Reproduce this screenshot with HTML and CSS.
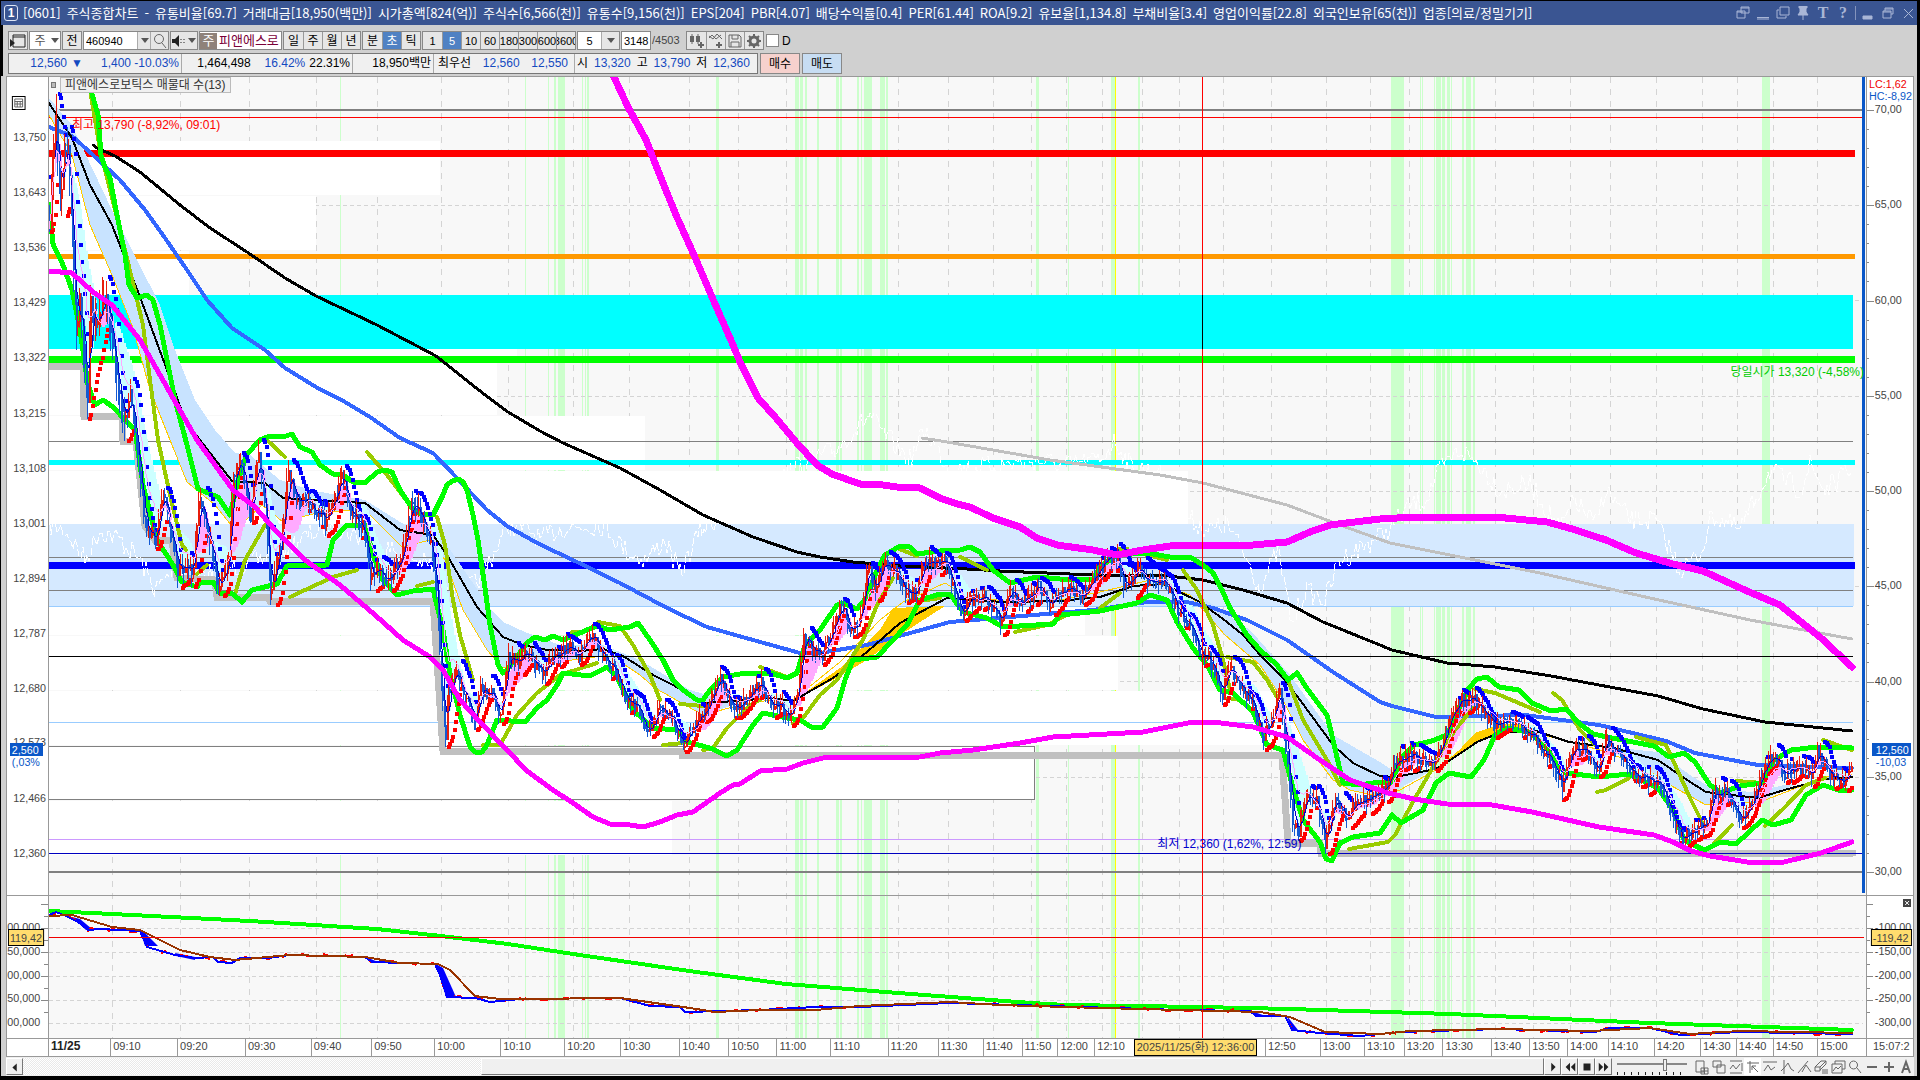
FILE: index.html
```html
<!DOCTYPE html>
<html lang="ko">
<head>
<meta charset="utf-8">
<title>[0601] 주식종합차트</title>
<link rel="stylesheet" href="styles.css">
</head>
<body>
<div class="window">
  <header class="title">
    <span class="title-num">1</span>
    <h1 class="title-text"><span>[0601]</span><span>주식종합차트</span><span>-</span><span>유통비율[69.7]</span><span>거래대금[18,950(백만)]</span><span>시가총액[824(억)]</span><span>주식수[6,566(천)]</span><span>유통수[9,156(천)]</span><span>EPS[204]</span><span>PBR[4.07]</span><span>배당수익률[0.4]</span><span>PER[61.44]</span><span>ROA[9.2]</span><span>유보율[1,134.8]</span><span>부채비율[3.4]</span><span>영업이익률[22.8]</span><span>외국인보유[65(천)]</span><span>업종[의료/정밀기기]</span></h1>
    <div class="title-btns">
      <button aria-label="분리"><svg viewBox="0 0 14 14"><path d="M5 1h8v6H5zM1 5h8v7H1z"/><path d="M5 2h8M1 6h6"/></svg></button>
      <button aria-label="접기"><svg viewBox="0 0 14 14"><path d="M1 11.500h12M1 13h12"/></svg></button>
      <button aria-label="복사"><svg viewBox="0 0 14 14"><path d="M4 1h9v8H4zM1 4v8h9v-2M1 4h2"/></svg></button>
      <button aria-label="고정"><svg viewBox="0 0 14 14"><path class="fill" d="M3 0h8v2h-1v4l2 3H2l2-3V2H3z"/><path d="M7 8v6"/></svg></button>
      <button class="glyph" aria-label="글자">T</button>
      <button class="glyph" aria-label="도움말">?</button>
      <i class="title-sep"></i>
      <button aria-label="최소화"><svg viewBox="0 0 14 14"><path class="fill" d="M2 10h9v3H2z"/></svg></button>
      <button aria-label="복원"><svg viewBox="0 0 14 14"><path d="M4 5V2h8v6h-2M2 5h8v7H2zM4 3h8M2 6h8"/></svg></button>
      <button aria-label="닫기"><svg viewBox="0 0 14 14"><path d="M3 3l9 9M12 3l-9 9"/></svg></button>
    </div>
  </header>

  <div class="tools">
    <div class="row">
      <button class="btn w20" aria-label="패널"><svg viewBox="0 0 16 16" class="ic"><path d="M3 2h12v12H3zM3 4h12"/><path class="fill" d="M0 6l5 4-5 4z"/></svg></button>
      <button class="btn w32 split dim"><span>주</span><i class="arr"></i></button>
      <button class="btn w20">전</button>
      <div class="field"><input class="code" aria-label="종목코드" value="460940"><button class="drop" aria-label="목록"><i class="arr"></i></button><button class="drop wide" aria-label="검색"><svg viewBox="0 0 16 16" class="ic soft"><circle cx="7" cy="6" r="4.500"/><path d="M10 10l4 5"/></svg></button></div>
      <button class="btn w28 split" aria-label="소리"><svg viewBox="0 0 16 16" class="ic"><path class="fill" d="M1 6h3l4-4v12l-4-4H1z"/><path d="M10 6v1M10 9v1M13 6v1M13 9v1"/></svg><i class="arr"></i></button>
      <div class="stock"><b>주</b><span>피앤에스로</span></div>
      <div class="group"><button>일</button><button>주</button><button>월</button><button>년</button></div>
      <div class="group"><button>분</button><button class="on">초</button><button>틱</button></div>
      <div class="group num"><button>1</button><button class="on">5</button><button>10</button><button>60</button><button>180</button><button>300</button><button>600</button><button>3600</button></div>
      <div class="field"><input class="cnt" aria-label="주기" value="5"><button class="drop wide" aria-label="주기 목록"><i class="arr"></i></button></div>
      <div class="field"><input class="bars" aria-label="봉 개수" value="3148"></div>
      <span class="total">/4503</span>
      <div class="group">
        <button aria-label="봉 추가"><svg viewBox="0 0 16 16" class="ic soft"><path class="fill" d="M1 3h4v6H1zM7 3h4v6H7z"/><path d="M3 1v10M9 1v10"/><path d="M12 9v6M9 12h6" stroke-width="2"/></svg></button>
        <button aria-label="지표 추가"><svg viewBox="0 0 16 16" class="ic soft"><path d="M1 5l3-3 4 4 5-4M1 3l4 3 4-5 5 5"/><path d="M11 9v6M8 12h6" stroke-width="2"/></svg></button>
        <button aria-label="저장"><svg viewBox="0 0 16 16" class="ic soft"><path d="M2 2h10l2 2v10H2zM5 2v4h6V2M4 14V9h8v5"/></svg></button>
        <button aria-label="설정"><svg viewBox="0 0 16 16" class="ic soft"><circle cx="8" cy="8" r="4" stroke-width="3"/><path d="M8 1v2M8 13v2M1 8h2M13 8h2M3 3l2 2M11 11l2 2M13 3l-2 2M5 11l-2 2" stroke-width="2"/></svg></button>
      </div>
      <label class="chk"><input type="checkbox">D</label>
    </div>
    <div class="row">
      <div class="quote">
        <span class="q q1 blue"><em class="e58">12,560</em><em class="e14">▼</em><em class="e48">1,400</em><em class="e48">-10.03%</em></span>
        <span class="q q2"><em class="e72">1,464,498</em><em class="e57 blue">16.42%</em><em>22.31%</em></span>
        <span class="q q3"><em>18,950백만</em></span>
        <span class="q q4"><em>최우선</em><em class="blue">12,560</em><em class="blue">12,550</em></span>
        <span class="q q5"><em>시</em><em class="blue">13,320</em><em>고</em><em class="blue">13,790</em><em>저</em><em class="blue">12,360</em></span>
      </div>
      <button class="trade buy">매수</button>
      <button class="trade sell">매도</button>
    </div>
  </div>

  <main class="chart">
    <div class="axis main-left"><svg id="axl" viewBox="7 77 42 818" preserveAspectRatio="none"></svg></div>
    <div class="plot"><svg id="main" viewBox="49 77 1817 818" preserveAspectRatio="none"></svg>
      <span class="legend"><i></i><b>피앤에스로보틱스 매물대 수(13)</b></span>
      <span class="note hi">최고 13,790 (-8,92%, 09:01)</span>
      <span class="note open">당일시가 13,320 (-4,58%)</span>
      <span class="note lo">최저 12,360 (1,62%, 12:59)</span>
    </div>
    <div class="axis right"><svg id="axr" viewBox="1866 77 47 818" preserveAspectRatio="none"></svg></div>
    <div class="axis"><svg id="axl2" viewBox="7 896 42 142" preserveAspectRatio="none"></svg></div>
    <div class="plot"><svg id="sub" viewBox="49 896 1817 142" preserveAspectRatio="none"></svg></div>
    <div class="axis right"><svg id="axr2" viewBox="1866 896 47 142" preserveAspectRatio="none"></svg></div>
    <div class="axis"></div>
    <div class="plot times" id="times"></div>
    <div class="axis right last">15:07:2</div>
  </main>

  <footer class="foot">
    <button class="sb" aria-label="왼쪽"><svg viewBox="0 0 16 16" class="ic"><path class="fill" d="M10 4v9L5 8.500z"/></svg></button>
    <div class="track"><div class="thumb"></div></div>
    <div class="play">
      <button class="sb" aria-label="재생"><svg viewBox="0 0 16 16" class="ic"><path class="fill" d="M6 3v10l5-5z"/></svg></button>
      <button class="sb" aria-label="뒤로"><svg viewBox="0 0 16 16" class="ic"><path class="fill" d="M8 3v10L3 8zM14 3v10L9 8z"/></svg></button>
      <button class="sb" aria-label="정지"><svg viewBox="0 0 16 16" class="ic"><path class="fill" d="M4 4h8v8H4z"/></svg></button>
      <button class="sb" aria-label="앞으로"><svg viewBox="0 0 16 16" class="ic"><path class="fill" d="M2 3v10l5-5zM8 3v10l5-5z"/></svg></button>
    </div>
    <input class="speed" type="range" aria-label="속도" value="70">
    <div class="fticons" id="ft"></div>
  </footer>
</div>
<script src="chart.js"></script>
</body>
</html>
```
FILE: styles.css
```css
* { box-sizing: border-box; }
body {
  margin: 0;
  background: #000;
  color: #000;
  font: 12px/16px "Liberation Sans", "Noto Sans CJK KR", sans-serif;
}
button, input, select { font: inherit; color: inherit; margin: 0; padding: 0; border: 0; background: none; }
em { font-style: normal; }
.window { min-height: 100vh; display: flex; flex-direction: column; border: solid #000; border-width: 1px 3px 4px 1px; background: #d0d0d0; }

.title { display: flex; align-items: center; height: 24px; background: #3a5592; color: #fff; padding: 0 1px 0 3px; flex: none; }
.title-num { width: 14px; height: 16px; border: 1px solid #dfe6f5; border-radius: 3px; text-align: center; line-height: 14px; font-weight: bold; }
.title-text { margin: 0 0 0 5px; font: 13px/16px "Noto Sans CJK KR", sans-serif; flex: 1; display: flex; gap: 6px; white-space: nowrap; }
.title-btns { display: flex; align-items: center; gap: 4px; color: #a9b6d6; }
.title-btns button { width: 16px; height: 18px; display: grid; place-items: center; }
.title-btns svg { width: 14px; height: 14px; fill: none; stroke: currentColor; }
.title-btns .fill { fill: currentColor; }
.title-btns .glyph { font: bold 16px/18px "Liberation Serif", serif; }
.title-sep { width: 1px; height: 14px; background: #8494bd; }

.tools { padding: 6px 0 2px 5px; display: flex; flex-direction: column; gap: 3px; border-left: 2px solid #000; background: #d0d0d0; flex: none; }
.row { display: flex; gap: 2px; align-items: stretch; }
.row:first-child { height: 19px; gap: 1px; }
.row:last-child { height: 21px; }
.btn, .group, .field, .stock { border: 1px solid #888; background: #e6e6e6; display: flex; align-items: center; justify-content: center; }
.w20 { width: 20px; }
.w28 { width: 28px; }
.w32 { width: 32px; background: #fff; }
.dim { color: #555; }
.split { justify-content: space-between; }
.split > span { flex: 1; }
.arr { border: 4px solid transparent; border-top: 5px solid #555; border-bottom: 0; margin: 0 3px; }
.split .arr { margin: 0 1px; }
.ic { width: 16px; height: 16px; fill: none; stroke: #222; }
.ic .fill { fill: #222; stroke: none; }
.soft { stroke: #666; }
.soft .fill { fill: #666; }
.field input { background: #fff; height: 17px; padding-left: 2px; outline: 0; font-size: 11px; }
.code { width: 53px; }
.field .cnt { width: 23px; padding: 0; text-align: center; }
.bars { width: 28px; }
.drop { width: 13px; height: 17px; border-left: 1px solid #aaa; display: grid; place-items: center; }
.drop.wide { width: 18px; }
.stock { width: 83px; background: #fff; justify-content: flex-start; overflow: hidden; color: #7a0038; white-space: nowrap; gap: 2px; font-size: 13px; }
.stock b { font-weight: normal; background: #8f827a; color: #fff; width: 17px; text-align: center; }
.group button { width: 19px; height: 17px; border-left: 1px solid #999; overflow: hidden; display: flex; justify-content: center; align-items: center; }
.group button:first-child { border: 0; }
.group .on { background: #4f81c3; color: #fff; }
.num { font-size: 11px; }
.total { color: #444; width: 33px; line-height: 19px; font-size: 11px; }
.chk { display: flex; gap: 3px; align-items: center; padding-left: 1px; }
.chk input { appearance: none; width: 13px; height: 13px; border: 1px solid #888; background: #fff; }

.quote { display: flex; border: 1px solid #777; background: #f0f0f0; width: 750px; line-height: 19px; }
.q { display: flex; border-right: 1px solid #aaa; justify-content: flex-end; padding-right: 2px; gap: 5px; white-space: nowrap; }
.q em { text-align: right; }
.q:last-child { border: 0; }
.blue { color: #1349c0; }
.q1 { width: 173px; gap: 0; }
.q2 { width: 171px; gap: 4px; }
.q3 { width: 81px; }
.q4 { width: 141px; padding: 0 6px 0 4px; justify-content: space-between; }
.q5 { flex: 1; padding: 0 7px 0 2px; justify-content: space-between; }
.e58 { width: 58px; } .e14 { width: 16px; } .e48 { width: 48px; } .e72 { width: 72px; } .e57 { width: 53px; }
.trade { width: 40px; border: 1px solid #888; }
.buy { background: #f6d1cd; }
.sell { background: #c7ddf3; }

.chart { flex: 1; display: grid; grid-template-columns: 42px 1fr 47px; grid-template-rows: 819fr 143fr 18px; border: 1px solid #999; border-bottom: 0; margin: 0 3px 0 5px; min-height: 400px; }
.chart > div { position: relative; border-bottom: 1px solid #999; background: #fff; min-width: 0; min-height: 0; overflow: hidden; }
.chart > .plot { background: #f8f8f8; }
.chart > .axis { border-right: 1px solid #999; }
.chart > .right { border-right: 0; border-left: 1px solid #999; }
.chart svg { position: absolute; width: 100%; height: 100%; font-size: 11px; }
.legend { position: absolute; left: 2px; top: 0; display: flex; align-items: center; gap: 4px; }
.legend i { width: 5px; height: 6px; background: #bbb; border: 1px solid #777; }
.legend b { font-weight: normal; background: #f0f0f0; border: 1px solid #bbb; padding: 0 4px; color: #333; line-height: 14px; }
.note { position: absolute; white-space: nowrap; }
.hi { left: 23px; top: 40px; color: #f00; }
.open { right: 2px; top: 287px; color: #0c0; }
.lo { left: 61%; top: 92.800%; color: #00c; }
.chart > .times { display: flex; background: #fff; color: #444; font-size: 11px; }
.times span { border-left: 1px solid #999; padding-left: 2px; min-width: 0; white-space: nowrap; line-height: 15px; }
.times span:first-child { border: 0; font-weight: bold; color: #222; font-size: 12px; }
.times .tag { position: absolute; left: 59.700%; top: 0; background: #ffdc6e; border: 1px solid #000; line-height: 15px; padding: 0 2px; }
.last { line-height: 15px; padding-left: 6px; color: #444; font-size: 11px; }

.foot { display: flex; height: 19px; margin: 0 3px 0 5px; background: #f0f0f0; flex: none; align-items: center; }
.sb { width: 17px; height: 17px; border: 1px solid #fff; border-right-color: #777; border-bottom-color: #777; background: #f0f0f0; display: grid; place-items: center; }
.sb .ic { width: 14px; height: 14px; }
.track { flex: 1; height: 17px; padding-left: 24%; background: repeating-conic-gradient(#fff 0 25%, #e9e9e9 0 50%) 0 0 / 2px 2px; }
.thumb { height: 17px; background: #f0f0f0; border: 1px solid #fff; border-right-color: #777; border-bottom-color: #777; }
.play { display: flex; }
.speed { appearance: none; width: 70px; height: 17px; margin: 0 6px 0 5px; background: linear-gradient(#888, #888) 0 5px / 100% 2px no-repeat, repeating-linear-gradient(90deg, #222 0 1px, transparent 1px 7px) 0 14px / 100% 3px no-repeat; }
.speed::-webkit-slider-thumb { appearance: none; width: 4px; height: 12px; margin-top: -3px; background: #f0f0f0; border: 1px solid #777; }
.fticons { display: flex; }
.fticons button { width: 17px; height: 17px; display: grid; place-items: center; }
.fticons .on { background: #fff; }
.fticons svg { width: 16px; height: 16px; fill: none; stroke: #666; }
```
FILE: chart.js
```js
const NS = 'http://www.w3.org/2000/svg';
const $ = id => document.getElementById(id);
function add(svg, tag, attrs, text) {
  const e = document.createElementNS(NS, tag);
  for (const k in attrs) e.setAttribute(k, attrs[k]);
  if (text) e.textContent = text;
  svg.appendChild(e);
  return e;
}
const pts = s => s.trim().split(/\s+/).map(p => p.split(',').map(Number));
let seed = 7;
const rnd = () => (seed = (seed * 16807) % 2147483647) / 2147483647;

const main = $('main'), sub = $('sub');
const line = (svg, s, color, w, extra) => add(svg, 'polyline', Object.assign({ points: s.trim(), fill: 'none', stroke: color, 'stroke-width': w, 'stroke-linejoin': 'round', 'stroke-linecap': 'round', 'shape-rendering': 'crispEdges' }, extra));
const rect = (svg, x, y, w, h, fill, extra) => add(svg, 'rect', Object.assign({ x, y, width: w, height: h, fill, 'shape-rendering': 'crispEdges' }, extra));
const dash = (svg, x1, y1, x2, y2, d) => add(svg, 'path', { d: `M${x1} ${y1}L${x2} ${y2}`, stroke: '#d4d4d4', 'stroke-dasharray': d, 'shape-rendering': 'crispEdges' });

/* grid and signal stripes */
const ticks = [112.5,180.5,249.5,316.5,377.5,441.5,508.5,573.5,629.5,689.5,738.5,786.5,840.5,898.5,948.5,993.5,1031.5,1066.5,1102.5,1142.5,1179.5,1223.5,1271.5,1326.5,1370.5,1409.5,1447.5,1495.5,1533.5,1570.5,1610.5,1656.5,1702.5,1737.5,1773.5,1817.5];
const stripes = [[340,1],[525,1],[548,1],[554,2],[558,7],[582,1],[585,1],[587,2],[716,3],[795,4],[800,3],[805,2],[817,2],[836,3],[840,2],[857,2],[861,1],[864,8],[880,5],[886,2],[1036,3],[1068,1],[1111,4],[1138,2],[1391,13],[1420,1],[1422,1],[1434,1],[1436,5],[1442,3],[1447,3],[1451,1],[1462,2],[1466,5],[1473,2],[1762,8]];
[main, sub].forEach(s => {
  ticks.forEach(x => dash(s, x, 77, x, 1038, '6 6'));
  stripes.forEach(([x, w]) => rect(s, x, 77, w, 961, '#ccffcc'));
  rect(s, 1115, 77, 1, 961, '#ffff00');
});
[205.5,300.5,396.5,491.5,586.5,681.5,777.5].forEach(y => dash(main, 49, y, 1863, y, '4 3'));
[928.5,952.5,976.5,1000.5,1023.5].forEach(y => dash(sub, 49, y, 1863, y, '4 3'));

/* volume profile */
[[141,440],[196,316],[251,189],[306,517],[361,497],[416,645],[471,1188],[526,1300],[581,1085],[636,1118],[691,1317],[746,1034],[801,672]].forEach(([y, x]) => rect(main, 49, y, x - 49, 54, '#fff'));
rect(main, 49, 295, 1804, 54, '#00ffff');
rect(main, 49, 524, 1805, 82, '#d5e9ff');

/* horizontal levels */
const h = (y, c, w, x2) => rect(main, 49, y, (x2 || 1853) - 49, w || 1, c);
h(109, '#808080', 2, 1863); h(117, '#f00', 1, 1863); h(441, '#808080', 1);
h(150, '#f00', 7, 1855); h(254, '#ff9900', 5, 1855); h(356, '#00ff00', 7, 1855);
h(460, '#00ffff', 5, 1855); h(557, '#808080', 1); h(562, '#0000ff', 7, 1855); h(590, '#808080', 1);
h(606, '#99ccff', 1); h(722, '#99ccff', 1); h(799, '#808080', 1, 1034); h(746, '#808080', 1, 1034);
rect(main, 1034, 746, 1, 54, '#808080');
h(839, '#cc99ff', 1); h(871, '#808080', 2, 1863);

/* lagging strength line */
const jag = (s, step, amp) => {
  const p = pts(s), out = [];
  for (let i = 0; i < p.length - 1; i++) {
    const [x1, y1] = p[i], [x2, y2] = p[i + 1];
    for (let x = x1; x < x2; x += step) out.push([x, Math.round(y1 + (y2 - y1) * (x - x1) / (x2 - x1) + (rnd() - .5) * amp)]);
  }
  return out;
};
const strength = jag('49,525 65,530 85,560 100,530 120,540 140,560 155,590 175,570 200,575 260,560 330,525 380,545 440,570 455,590 475,585 490,560 508,525 530,530 540,540 560,528 605,525 625,550 645,560 665,540 680,575 700,530 800,465 835,450 870,415 880,430 910,460 925,430 950,470 1000,465 1035,460 1068,465 1100,460 1115,440 1130,465 1160,475 1190,520 1210,530 1228,525 1250,565 1260,590 1278,550 1292,625 1305,590 1325,600 1340,560 1390,530 1410,505 1425,500 1440,470 1460,450 1480,465 1500,490 1530,485 1560,530 1575,500 1595,525 1605,490 1630,520 1655,520 1680,570 1700,555 1712,515 1740,530 1770,470 1800,490 1810,465 1825,490 1852,470', 2, 22);
line(main, strength.join(' '), '#fff', 1, { 'stroke-dasharray': '7 3' });

/* trailing low */
line(main, '49,366 83,366 84,416 122,416 123,441 136,441 145,526 155,540 172,540 177,578 215,580 217,597 268,597 270,601 433,601 443,751 681,751 682,755 1282,755 1288,843 1320,843 1321,853 1853,853', '#c0c0c0', 7, { 'stroke-linejoin': 'miter' });
h(853, '#0000c0', 1, 1863);

/* cloud */
const poly = (s, f) => add(main, 'polygon', { points: s, fill: f, 'shape-rendering': 'crispEdges' });
poly('49,98 72,125 93,170 112,210 137,260 160,305 175,350 195,400 215,430 235,453 250,455 280,480 310,490 365,500 405,525 433,530 440,535 445,560 430,540 402,547 365,510 320,512 283,522 262,505 235,530 215,505 187,482 170,440 150,390 133,328 112,275 90,225 72,155 49,115', '#c8e3ff');
poly('440,535 490,608 503,622 525,632 560,645 600,644 640,660 690,690 715,697 740,703 703,715 655,688 640,675 610,655 550,663 503,668 487,650 463,610 445,560', '#c8e3ff');
poly('1180,590 1203,598 1250,630 1290,675 1333,735 1380,762 1400,775 1436,768 1400,788 1380,797 1350,790 1333,780 1303,740 1283,700 1260,665 1225,635 1190,595', '#c8e3ff');
poly('1600,746 1658,752 1690,775 1710,787 1750,792 1800,782 1760,802 1706,805 1670,785 1640,765', '#c8e3ff');
poly('793,701 840,668 880,630 893,608 945,606 900,635 867,660 833,680', '#ffcc00');
poly('1450,760 1475,733 1500,724 1525,724 1536,731 1499,734 1477,742 1455,757', '#ffcc00');
line(main, '49,115 72,155 90,225 112,275 133,328 150,390 170,440 187,482 215,505 235,530 262,505 283,522 320,512 365,510 402,547 430,540 445,560 463,610 487,650 503,668 550,663 610,655 640,675 655,688 703,715 740,705 770,700 793,700 840,662 880,620 903,602 945,583 965,595 1010,602 1060,600 1100,592 1150,580 1190,595 1225,635 1260,665 1283,700 1303,740 1333,780 1350,790 1380,797 1400,790 1436,770 1460,750 1500,727 1536,733 1600,750 1640,765 1670,785 1706,805 1760,802 1825,777 1852,774', '#ffcc00', 1);

/* price series */
const price = [];
{
  const p = pts('49,230 52,160 56,125 60,200 64,150 68,150 72,240 76,330 80,300 87,400 90,300 96,330 106,290 110,330 118,385 125,420 130,395 137,450 145,525 155,540 163,490 170,530 177,570 185,565 193,570 198,500 207,530 213,560 218,590 228,560 233,480 240,455 250,520 258,450 266,520 270,590 280,545 288,470 296,505 306,500 315,510 325,520 335,500 341,475 350,510 362,525 370,575 380,570 388,580 400,560 412,500 420,515 430,540 436,590 441,680 445,738 448,690 455,670 462,690 475,720 480,690 492,695 500,715 508,655 518,665 525,648 535,665 542,675 555,655 570,645 576,662 584,645 592,632 600,655 615,670 625,695 640,712 650,735 660,705 672,720 683,743 690,730 705,712 715,690 720,676 730,705 740,705 750,690 762,682 770,705 780,705 788,718 797,690 803,640 812,650 822,655 830,635 841,605 850,632 860,620 868,565 875,590 885,560 897,575 905,590 915,594 925,562 935,560 945,562 955,595 963,615 970,600 985,595 1000,622 1010,590 1025,605 1037,582 1050,605 1068,585 1080,598 1095,575 1105,562 1117,557 1125,590 1138,565 1150,585 1165,580 1175,605 1187,622 1198,650 1208,655 1222,693 1230,665 1240,690 1252,700 1262,738 1272,720 1279,690 1287,760 1292,820 1298,830 1306,795 1316,800 1325,842 1335,800 1345,815 1358,800 1370,800 1388,785 1394,760 1405,755 1420,760 1432,765 1443,740 1452,710 1462,700 1475,700 1485,715 1497,725 1510,722 1525,728 1540,745 1550,758 1562,785 1572,750 1585,750 1597,770 1606,740 1618,755 1630,770 1645,780 1660,780 1670,810 1682,838 1695,830 1707,820 1712,795 1725,790 1733,805 1742,822 1755,795 1765,765 1773,755 1785,775 1797,765 1812,775 1817,750 1830,775 1843,780 1852,758');
  for (let i = 0; i < p.length - 1; i++) {
    const [x1, y1] = p[i], [x2, y2] = p[i + 1], n = Math.max(1, Math.round((x2 - x1) / 1.5));
    for (let k = 0; k < n; k++) {
      const x = x1 + (x2 - x1) * k / n, y = y1 + (y2 - y1) * k / n + (rnd() - .5) * 12;
      const a = x < 125 ? 26 : x < 450 ? 12 : 8;
      price.push({ x, y, hi: y - rnd() * a - 2, lo: y + rnd() * a + 2 });
    }
  }
}
const avg = n => price.map((_, i) => {
  const s = price.slice(Math.max(0, i - n + 1), i + 1);
  return s.reduce((t, q) => t + q.y, 0) / s.length;
});
const fast = avg(5), slow = avg(20);
price.forEach((q, i) => {
  const d = fast[i] - slow[i];
  if (Math.abs(d) > 3) rect(main, q.x, Math.min(fast[i], slow[i]), 2, Math.abs(d), d < 0 ? '#ffaaff' : '#ccffff');
});

/* long averages and envelopes */
line(main, '922,438 947,442 1050,460 1160,475 1203,483 1287,505 1340,525 1390,543 1480,561 1540,573 1650,598 1750,620 1852,639', '#c0c0c0', 3);
line(main, '93,145 97,148 115,156 140,172 180,205 210,228 247,252 285,278 316,296 377,325 436,356 480,391 508,412 540,431 563,443 620,468 660,490 703,515 753,537 797,552 820,557 853,562 900,566 967,569 1000,571 1093,575 1160,575 1203,580 1243,590 1287,603 1323,622 1380,645 1392,650 1447,663 1495,667 1551,676 1599,685 1658,696 1703,709 1765,722 1852,731', '#000', 3);
line(main, '49,127 72,136 93,155 120,180 145,210 165,238 187,270 207,300 232,328 265,350 285,368 316,387 345,402 370,417 400,438 433,453 457,478 487,510 507,526 537,543 577,562 620,583 667,608 707,627 753,640 800,653 820,653 867,645 903,635 950,622 1010,617 1093,610 1147,602 1187,602 1213,608 1247,620 1287,640 1333,672 1380,702 1392,706 1436,717 1525,715 1599,725 1666,741 1695,753 1758,765 1852,768', '#3366ff', 4);
line(main, '49,103 72,138 90,185 112,225 125,258 143,305 167,370 185,420 200,440 232,481 265,483 283,498 345,502 365,503 400,530 433,535 447,555 477,607 503,637 523,645 547,650 580,651 603,649 623,656 653,675 673,685 703,703 737,701 770,698 793,701 833,678 867,652 900,623 947,598 973,600 1003,602 1060,601 1100,597 1133,586 1163,584 1200,602 1227,622 1243,635 1260,655 1283,678 1300,700 1333,745 1353,763 1380,776 1395,777 1436,769 1455,757 1477,742 1499,733 1536,731 1569,742 1614,748 1658,760 1684,778 1706,792 1758,798 1788,789 1825,779 1852,777', '#000', 2);
['90,90 100,150 110,190 115,210 125,250 137,300 143,325 150,380 158,440 170,495 182,545 186,550', '197,574 207,565', '235,594 245,560 265,525', '267,440 285,457', '290,597 333,577 357,570', '367,452 387,475 410,505', '417,586 433,582', '437,517 445,545 453,600 460,635 473,680', '483,745 500,745 517,715 537,693 560,675 597,663', '572,632 583,632', '598,622 620,626 633,645 650,675 660,700', '663,745 683,743', '680,704 703,706', '703,750 713,748 727,728 750,705 760,700', '760,667 787,677', '793,724 803,718 820,695 837,680 850,660 863,640 877,605 893,578', '897,548 917,556', '920,601 940,598', '960,557 987,570', '1015,632 1047,625 1067,615', '1100,608 1120,593', '1118,549 1127,549', '1143,554 1167,560', '1183,570 1197,590 1213,625 1223,660 1230,690', '1228,698 1240,700', '1227,657 1253,662 1267,680 1277,697', '1288,680 1303,720 1327,760 1340,785', '1349,849 1388,842 1395,835 1414,800 1436,762 1455,730 1473,708', '1475,689 1495,693 1540,712', '1553,693 1562,700 1580,730 1595,745', '1597,792 1606,790 1629,778', '1636,737 1666,745 1691,800 1702,822', '1710,848 1732,825', '1736,781 1762,783', '1765,826 1784,808 1806,785 1825,778', '1823,740 1852,750'].forEach(s => line(main, s, '#99cc00', 4));
line(main, '86,77 92,94 98,115 101,155 104,165 110,178 115,205 125,255 129,285 137,298 147,295 153,300 160,325 167,360 175,400 187,445 198,489 218,497 230,515 238,480 247,454 260,440 270,436 283,437 292,434 300,447 312,452 320,465 333,474 343,475 353,482 365,483 377,472 385,470 392,472 400,490 412,508 420,514 433,515 443,495 447,485 452,481 459,479 463,482 467,490 473,515 478,540 485,588 490,625 498,665 503,673 507,670 527,643 535,637 545,640 553,636 563,640 587,630 597,626 610,630 630,627 638,623 650,640 663,660 673,680 683,690 697,700 703,700 710,690 723,677 740,674 770,673 787,678 797,673 805,645 820,630 837,605 843,603 857,609 867,597 877,570 885,555 900,546 910,547 917,554 940,551 960,550 970,547 980,552 993,570 1010,583 1037,577 1060,579 1093,579 1100,567 1117,555 1147,553 1170,557 1190,557 1203,565 1213,573 1222,590 1230,608 1247,635 1260,650 1277,665 1288,680 1297,673 1308,690 1327,715 1333,740 1343,783 1360,785 1380,782 1392,782 1401,758 1414,745 1432,741 1447,735 1458,710 1469,688 1477,679 1487,677 1499,687 1519,690 1532,703 1551,711 1566,709 1580,724 1593,734 1617,739 1654,746 1669,757 1684,753 1695,762 1710,785 1721,793 1740,786 1762,783 1773,761 1791,750 1817,747 1852,748', '#00ff00', 5);
line(main, '49,204 53,244 63,265 72,290 80,330 88,385 95,405 103,400 113,407 127,422 135,430 143,485 157,540 173,565 182,582 197,587 200,582 213,582 220,593 233,594 242,602 252,590 277,584 287,566 327,565 333,540 347,525 365,525 373,555 383,580 397,595 413,591 433,589 443,630 450,675 460,715 470,747 475,752 482,752 487,745 497,720 525,722 537,708 547,700 557,685 563,673 590,676 607,667 617,677 633,710 653,728 677,730 687,742 710,748 727,756 737,750 753,725 763,713 787,718 800,720 813,728 823,727 837,708 845,680 853,660 877,657 893,640 907,625 920,600 940,594 950,594 963,612 987,618 1003,627 1053,624 1060,615 1100,611 1137,603 1150,595 1167,600 1177,622 1193,648 1207,665 1220,690 1233,693 1253,712 1267,745 1283,750 1293,788 1303,820 1320,842 1326,859 1332,861 1340,843 1353,837 1380,833 1392,815 1401,823 1423,810 1436,783 1449,773 1471,777 1484,760 1495,735 1506,728 1529,732 1547,748 1558,765 1566,773 1599,777 1629,774 1658,788 1673,810 1684,840 1704,850 1721,842 1736,844 1762,820 1773,825 1791,820 1806,795 1823,785 1838,790 1852,790', '#00ff00', 5);

/* parabolic dots */
{
  let up = false, sar = price[0].hi - 30, ep = price[0].lo, af = .03;
  price.forEach(q => {
    sar += af * (ep - sar);
    if (up ? q.lo > sar : q.hi < sar) { up = !up; sar = ep; ep = up ? q.hi : q.lo; af = .04; }
    else if (up ? q.hi < ep : q.lo > ep) { ep = up ? q.hi : q.lo; af = Math.min(.25, af + .03); }
    rect(main, Math.round(q.x) - 1, Math.round(sar) - 2, 4, 4, up ? '#ff0000' : '#0000ff');
  });
}
/* candles */
price.forEach((q, i) => {
  const x = Math.round(q.x), n = price[i - 1] || q;
  const c = q.y < n.y ? '#e81c0c' : '#1459d2';
  rect(main, x, q.hi, 1, q.lo - q.hi, c);
  rect(main, x, Math.min(q.y, n.y), 2, Math.abs(q.y - n.y) + 1, c);
});
line(main, price.map((q, i) => q.x.toFixed(0) + ',' + fast[i].toFixed(0)).join(' '), '#0000cc', 1);
line(main, price.map((q, i) => q.x.toFixed(0) + ',' + (slow[i] * .5 + fast[i] * .5).toFixed(0)).join(' '), '#ffaaff', 1);

line(main, '614,77 628,107 646,140 661,178 676,215 694,255 712,297 733,345 740,362 758,398 776,418 796,442 817,465 832,474 860,484 883,485 897,487 920,488 940,498 957,504 970,507 993,518 1020,527 1037,538 1057,545 1093,550 1117,555 1143,550 1177,545 1253,545 1287,542 1310,532 1330,525 1380,519 1414,517 1495,517 1547,522 1569,528 1606,540 1636,553 1673,564 1703,571 1747,591 1780,605 1821,638 1852,667', '#ff00ff', 7);
line(main, '49,271 72,273 93,292 112,305 140,340 160,375 177,405 197,440 233,490 255,507 275,530 305,560 340,585 375,615 403,640 430,657 443,670 460,700 480,722 507,750 527,771 553,790 573,803 593,817 610,824 630,825 643,827 660,822 677,815 693,812 703,805 720,793 733,785 740,784 760,771 787,769 803,763 823,758 920,757 940,753 973,750 1020,743 1053,737 1143,732 1193,722 1213,722 1253,727 1287,737 1320,760 1350,780 1388,793 1414,799 1447,804 1492,805 1532,812 1599,827 1654,835 1673,842 1691,851 1710,856 1747,862 1784,862 1821,853 1852,842', '#ff00ff', 5);
h(656, '#000', 1);
rect(main, 1202, 77, 1, 818, '#ff0000');
rect(main, 1202, 295, 1, 54, '#000');
rect(main, 1862, 77, 3, 816, '#0a57c8');

/* lower panel */
const brown = '49,916 72,915 112,927 140,930 160,940 180,950 210,957 235,960 290,955 365,957 400,963 438,964 450,970 475,996 500,999 520,999 620,998 690,1008 715,1012 760,1010 815,1010 860,1006 950,1002 1000,1005 1100,1008 1260,1012 1290,1017 1325,1032 1380,1034 1410,1031 1500,1029 1590,1031 1650,1028 1690,1034 1740,1031 1852,1033';
const flow = '49,915 56,912 66,916 78,922 88,930 100,929 140,931 147,947 175,955 195,958 213,957 218,962 232,963 240,958 268,958 290,955 365,957 372,962 435,964 440,975 447,997 475,998 490,1002 520,999 620,998 650,1006 680,1007 685,1012 760,1010 815,1007 860,1007 950,1003 1180,1010 1250,1011 1256,1016 1285,1016 1292,1030 1320,1033 1360,1036 1400,1032 1500,1029 1595,1032 1610,1028 1650,1028 1680,1035 1740,1032 1852,1034';
['72,917 80,919 92,929 86,930', '140,930 145,933 158,946 145,946', '175,953 195,957 195,960 176,956', '366,957 378,962 370,962', '436,964 443,968 456,997 446,997', '1254,1012 1266,1016 1256,1016', '1287,1016 1298,1030 1291,1030'].forEach(s => add(sub, 'polygon', { points: s, fill: '#0000ff' }));
line(sub, '49,911 112,914 250,921 377,929 441,936 508,944 573,954 689,971 786,984 898,993 1031,1003 1066,1005 1200,1007 1290,1009 1450,1014 1650,1023 1852,1030', '#00ff00', 4);
line(sub, jag(flow, 3, 3).join(' '), '#ff0000', 2, { 'stroke-dasharray': '7 16' });
line(sub, flow, '#0000ff', 2);
line(sub, brown, '#993300', 2);
rect(sub, 49, 937, 1815, 1, '#f00000');
rect(sub, 1202, 896, 1, 142, '#ff0000');

/* axes */
const txt = (svg, x, y, s, anchor, fill) => add(svg, 'text', { x, y: y + 4, 'text-anchor': anchor || 'start', fill: fill || '#444' }, s);
const axl = $('axl'), axr = $('axr'), axl2 = $('axl2'), axr2 = $('axr2');
['13,750','13,643','13,536','13,429','13,322','13,215','13,108','13,001','12,894','12,787','12,680','12,573','12,466','12,360'].forEach((s, i) => txt(axl, 47, Math.round((i === 11 ? 136 : 137) + i * 55.1), s, 'end'));
rect(axl, 12.5, 96.5, 13, 13, '#fff', { stroke: '#000' });
add(axl, 'path', { d: 'M15 99h8v8h-8zM15 101.500h8M15 104h8M17.500 101v6M20.500 101v6', fill: 'none', stroke: '#666' });
rect(axl, 10, 743, 34, 13, '#0a57c8'); txt(axl, 12, 750, '2,560', '', '#fff'); txt(axl, 12, 762, '(,03%', '', '#0a57c8');
txt(axr, 1868, 84, 'LC:1,62', '', '#f00000'); txt(axr, 1868, 96, 'HC:-8,92', '', '#0a57c8');
for (let i = 0; i <= 40; i++) rect(axr, 1866, Math.round(110 + i * 19.05), i % 5 ? 2 : 7, 1, '#888');
['70,00','65,00','60,00','55,00','50,00','45,00','40,00','35,00','30,00'].forEach((s, i) => txt(axr, 1874, Math.round(109 + i * 95.25), s));
rect(axr, 1871, 743, 40, 13, '#0a57c8'); txt(axr, 1875, 750, '12,560', '', '#fff'); txt(axr, 1875, 762, '-10,03', '', '#0a57c8');
['00,000','50,000','00,000','50,000','00,000'].forEach((s, i) => txt(axl2, 41, Math.round(927 + i * 23.8), s, 'end'));
['-100,00','-150,00','-200,00','-250,00','-300,00'].forEach((s, i) => txt(axr2, 1874, Math.round(927 + i * 23.8), s));
for (let i = 0; i < 10; i++) { rect(axl2, i % 2 ? 45 : 42, Math.round(904 + i * 12), i % 2 ? 4 : 7, 1, '#888'); rect(axr2, 1866, Math.round(904 + i * 12), i % 2 ? 3 : 6, 1, '#888'); }
rect(axl2, 8.5, 929.5, 36, 16, '#ffdc6e', { stroke: '#000' }); txt(axl2, 10, 938, '119,42');
rect(axr2, 1870.5, 929.5, 41, 16, '#ffdc6e', { stroke: '#000' }); txt(axr2, 1872, 938, '-119,42');
rect(axr2, 1903, 899, 8, 8, '#444'); add(axr2, 'path', { d: 'M1905 901l4 4m0-4l-4 4', stroke: '#fff' });

/* time scale; the three slots beneath the cursor tag carry no label */
const names = ['11/25','09:10','09:20','09:30','09:40','09:50','10:00','10:10','10:20','10:30','10:40','10:50','11:00','11:10','11:20','11:30','11:40','11:50','12:00','12:10','','','','12:50','13:00','13:10','13:20','13:30','13:40','13:50','14:00','14:10','14:20','14:30','14:40','14:50','15:00'];
names.forEach((s, i) => {
  const e = document.createElement('span');
  e.textContent = s;
  e.style.flex = `${(ticks[i] || 1866.5) - (ticks[i - 1] || 49.5)} 0 0px`;
  $('times').appendChild(e);
});
const tag = document.createElement('span');
tag.className = 'tag'; tag.textContent = '2025/11/25(화) 12:36:00';
$('times').appendChild(tag);

/* drawing tools */
[['새 차트','M2 2h8v11H2zM7 9h7v6H7zM10.500 9v6M7 12h7'],['복제','M2 2h8v6H2zM6 6h8v8H6z'],['영역','M2 2h12M2 14h12M2 10l3-4 3 4 4-5M14 4v8'],['십자선','M2 4h12M5 2v12M7 7l6 6M7 7v4M7 7h4'],['수평선','M1 3h14M2 12l4-6 3 5 4-3'],['수직선','M5 1v14M2 12l4-4 3-4 3 6 3 2'],['추세선','M2 14L12 2M6 13l4-7 5 7'],['지우기','M2 8l6-6h5l-6 6zM2 8v4h5V8M13 2v3l-6 6M10 10v5M12 10v5M14 10v5'],['이미지','M2 5h10v9H2zM5 5V2h10v8h-3M3 12l3-4 2 2 3-3'],['돋보기','M10 9l4 5M6.500 2a4 4 0 1 0 .1 0'],['축소','M3 8h10'],['확대','M3 8h10M8 3v10'],['글꼴','M4 14L8 3l4 11M5 10h6']].forEach(([n, d], i) => {
  const b = document.createElement('button');
  b.setAttribute('aria-label', n);
  if (i === 3) b.className = 'on';
  const s = add(b, 'svg', { viewBox: '0 0 16 16' });
  add(s, 'path', { d, 'stroke-width': i > 9 ? 2 : 1 });
  $('ft').appendChild(b);
});
```
